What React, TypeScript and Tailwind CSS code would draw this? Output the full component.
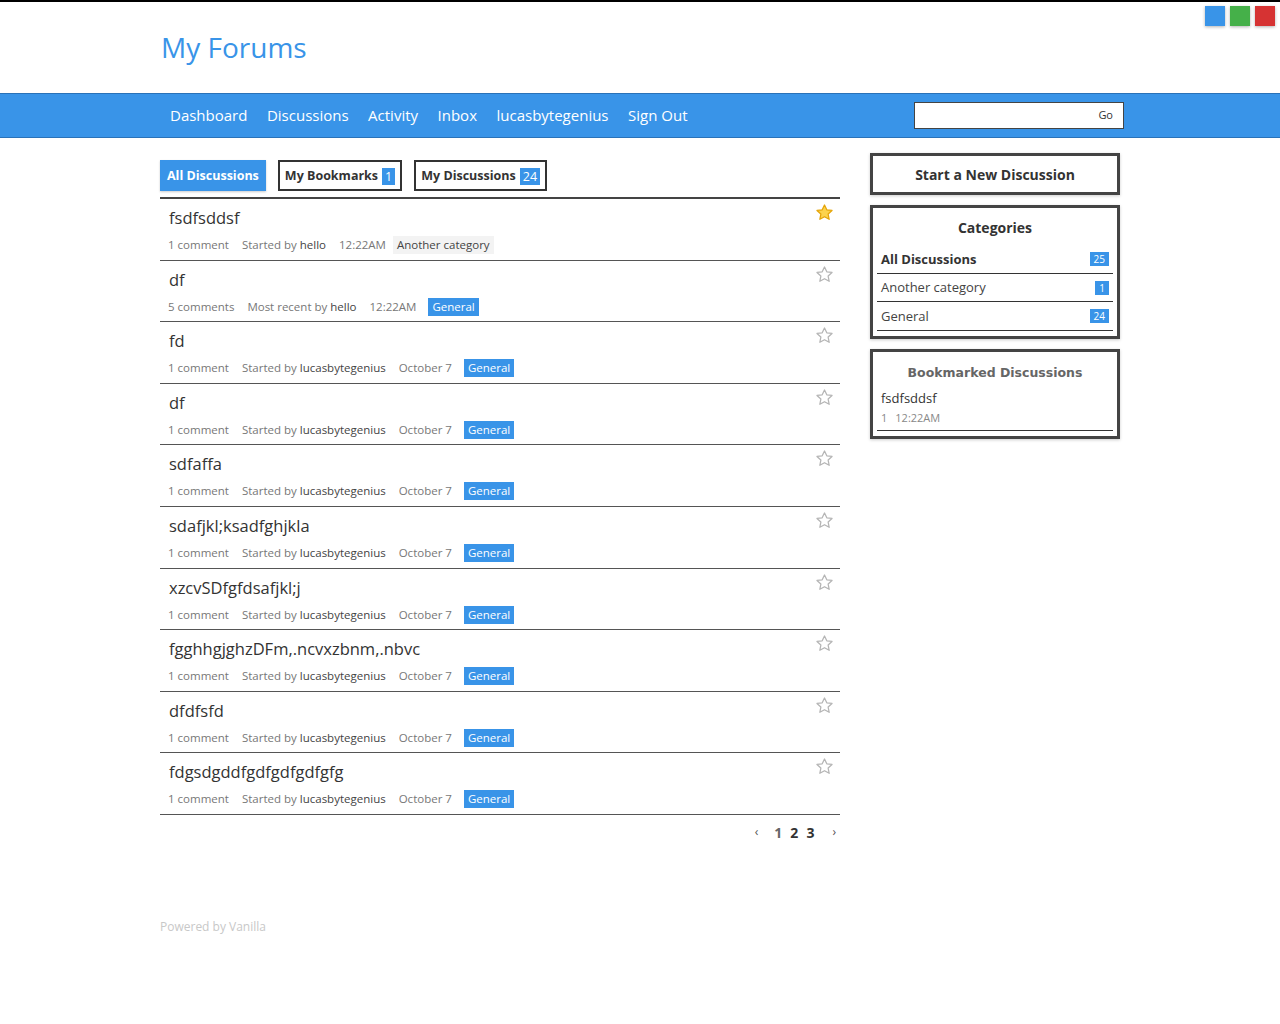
import React from "react";

const discussions = [
  { title: "fsdfsddsf", comments: "1 comment", who: "Started by", user: "hello", when: "12:22AM", cat: "Another category", starred: true },
  { title: "df", comments: "5 comments", who: "Most recent by", user: "hello", when: "12:22AM", cat: "General" },
  { title: "fd", comments: "1 comment", who: "Started by", user: "lucasbytegenius", when: "October 7", cat: "General" },
  { title: "df", comments: "1 comment", who: "Started by", user: "lucasbytegenius", when: "October 7", cat: "General" },
  { title: "sdfaffa", comments: "1 comment", who: "Started by", user: "lucasbytegenius", when: "October 7", cat: "General" },
  { title: "sdafjkl;ksadfghjkla", comments: "1 comment", who: "Started by", user: "lucasbytegenius", when: "October 7", cat: "General" },
  { title: "xzcvSDfgfdsafjkl;j", comments: "1 comment", who: "Started by", user: "lucasbytegenius", when: "October 7", cat: "General" },
  { title: "fgghhgjghzDFm,.ncvxzbnm,.nbvc", comments: "1 comment", who: "Started by", user: "lucasbytegenius", when: "October 7", cat: "General" },
  { title: "dfdfsfd", comments: "1 comment", who: "Started by", user: "lucasbytegenius", when: "October 7", cat: "General" },
  { title: "fdgsdgddfgdfgdfgdfgfg", comments: "1 comment", who: "Started by", user: "lucasbytegenius", when: "October 7", cat: "General" },
];

const categories = [
  { name: "All Discussions", count: "25", bold: true },
  { name: "Another category", count: "1" },
  { name: "General", count: "24" },
];

function Star({ filled }: { filled?: boolean }) {
  return (
    <svg width="19" height="19" viewBox="0 0 24 24" className="block">
      <path
        d="M12 2.5l2.9 6.1 6.6.8-4.9 4.6 1.3 6.6L12 17.3l-5.9 3.3 1.3-6.6-4.9-4.6 6.6-.8z"
        fill={filled ? "#fcd34d" : "none"}
        stroke={filled ? "#e5a50a" : "#b5b5b5"}
        strokeWidth="1.6"
        strokeLinejoin="round"
      />
    </svg>
  );
}

export default function App() {
  return (
    <div className="min-h-[1024px] bg-white border-t-2 border-black text-[#333]" style={{ fontFamily: "'Open Sans', 'Noto Sans', sans-serif" }}>
      {/* colour switcher */}
      <div className="absolute right-[5px] top-[6px] flex gap-[5px]">
        <span className="w-5 h-5 bg-[#3994e8] shadow-[0_1px_3px_rgba(0,0,0,0.3)]" />
        <span className="w-5 h-5 bg-[#45b049] shadow-[0_1px_3px_rgba(0,0,0,0.3)]" />
        <span className="w-5 h-5 bg-[#d63333] shadow-[0_1px_3px_rgba(0,0,0,0.3)]" />
      </div>

      <div className="w-[960px] mx-auto h-[91px] pt-[25px]">
        <h1 className="text-[28px] leading-[40px] text-[#3994e8] pl-px">My Forums</h1>
      </div>

      <div className="h-[45px] bg-[#3994e8] border-y border-[#2a72b8]">
        <div className="w-[960px] mx-auto h-full flex items-center justify-between">
          <nav className="flex gap-[19.5px] pl-[10px] text-[15px] text-white">
            <span>Dashboard</span>
            <span>Discussions</span>
            <span>Activity</span>
            <span>Inbox</span>
            <span>lucasbytegenius</span>
            <span>Sign Out</span>
          </nav>
          <div className="w-[210px] h-[27px] bg-white border border-[#444] mr-[-4px] flex items-center justify-end pr-[10px] text-[11px] text-[#333]">
            Go
          </div>
        </div>
      </div>

      <div className="w-[960px] mx-auto flex justify-between pt-[15px]">
        <main className="w-[680px]">
          <div className="flex gap-3 pt-[7px] pb-[6px] text-[12.5px] font-bold">
            <span className="h-[31px] px-[7px] pt-[2px] flex items-center bg-[#3994e8] text-white shadow-[0_1px_2px_rgba(0,0,0,0.2)]">All Discussions</span>
            <span className="h-[31px] px-[5px] pt-[2px] flex items-center gap-[4px] border-2 border-[#333] text-[#333]">
              My Bookmarks
              <span className="bg-[#3994e8] text-white font-normal px-[3px] leading-[17px]">1</span>
            </span>
            <span className="h-[31px] px-[5px] pt-[2px] flex items-center gap-[4px] border-2 border-[#333] text-[#333]">
              My Discussions
              <span className="bg-[#3994e8] text-white font-normal px-[3px] leading-[17px]">24</span>
            </span>
          </div>
          <div className="border-t-2 border-[#444]">
            {discussions.map((d, i) => (
              <div key={i} className="relative h-[61.6px] border-b border-[#555] pl-[9px] pt-[7px]">
                <div className="text-[16.5px] leading-[24px] text-[#333]">{d.title}</div>
                <div className="flex items-center gap-[13px] text-[11.5px] leading-[18px] text-[#777] mt-[6px] -ml-px">
                  <span>{d.comments}</span>
                  <span>
                    {d.who} <span className="text-[#444]">{d.user}</span>
                  </span>
                  <span>{d.when}</span>
                  {d.cat === "General" ? (
                    <span className="bg-[#3994e8] text-white px-[4px] -ml-[1px]">General</span>
                  ) : (
                    <span className="bg-[#f3f3f3] text-[#444] px-[4px] -ml-[6px]">{d.cat}</span>
                  )}
                </div>
                <div className="absolute right-[6px] top-[4px]">
                  <Star filled={d.starred} />
                </div>
              </div>
            ))}
          </div>
          <div className="flex justify-end items-center gap-[10px] pr-[4px] pt-[7px] text-[14px] font-bold text-[#333]">
            <span className="text-[12px] font-normal text-[#555] mr-[6px]">‹</span>
            <span className="text-[#666]">1</span>
            <span className="-ml-[2px]">2</span>
            <span className="-ml-[2px]">3</span>
            <span className="text-[12px] font-normal text-[#555] ml-[8px]">›</span>
          </div>
          <div className="mt-[75px] text-[12px] text-[#c8c8c8]">Powered by Vanilla</div>
        </main>

        <aside className="w-[250px] flex flex-col gap-[10px]">
          <div className="h-[42px] border-[3px] border-[#444] flex items-center justify-center text-[14px] font-bold text-[#333] shadow-[0_1px_3px_rgba(0,0,0,0.2)]">
            Start a New Discussion
          </div>
          <div className="border-[3px] border-[#444] px-[4px] pt-[10px] pb-[5px] shadow-[0_1px_3px_rgba(0,0,0,0.2)]">
            <div className="text-center text-[14px] font-bold text-[#333] leading-[20px] mb-[7px]">Categories</div>
            {categories.map((c) => (
              <div key={c.name} className="flex items-center justify-between h-[28.5px] border-b border-[#333] pl-[4px] pr-[4px] pt-[1px]">
                <span className={c.bold ? "text-[13px] font-bold text-[#333]" : "text-[13px] text-[#444]"}>{c.name}</span>
                <span className="bg-[#3994e8] text-white text-[10px] leading-[14px] px-[4px]">{c.count}</span>
              </div>
            ))}
          </div>
          <div className="border-[3px] border-[#444] px-[4px] pt-[11px] pb-[5px] shadow-[0_1px_3px_rgba(0,0,0,0.2)]">
            <div className="text-center text-[12.5px] font-bold text-[#666] leading-[20px] mb-[6px]" style={{ fontFamily: "'DejaVu Sans', Verdana, sans-serif" }}>
              Bookmarked Discussions
            </div>
            <div className="pl-[4px] pb-[4px] border-b border-[#333]">
              <div className="text-[13px] text-[#333] leading-[18px]">fsdfsddsf</div>
              <div className="text-[11px] text-[#888] leading-[16px] mt-[3px] flex gap-[8px]">
                <span>1</span>
                <span>12:22AM</span>
              </div>
            </div>
          </div>
        </aside>
      </div>
    </div>
  );
}
